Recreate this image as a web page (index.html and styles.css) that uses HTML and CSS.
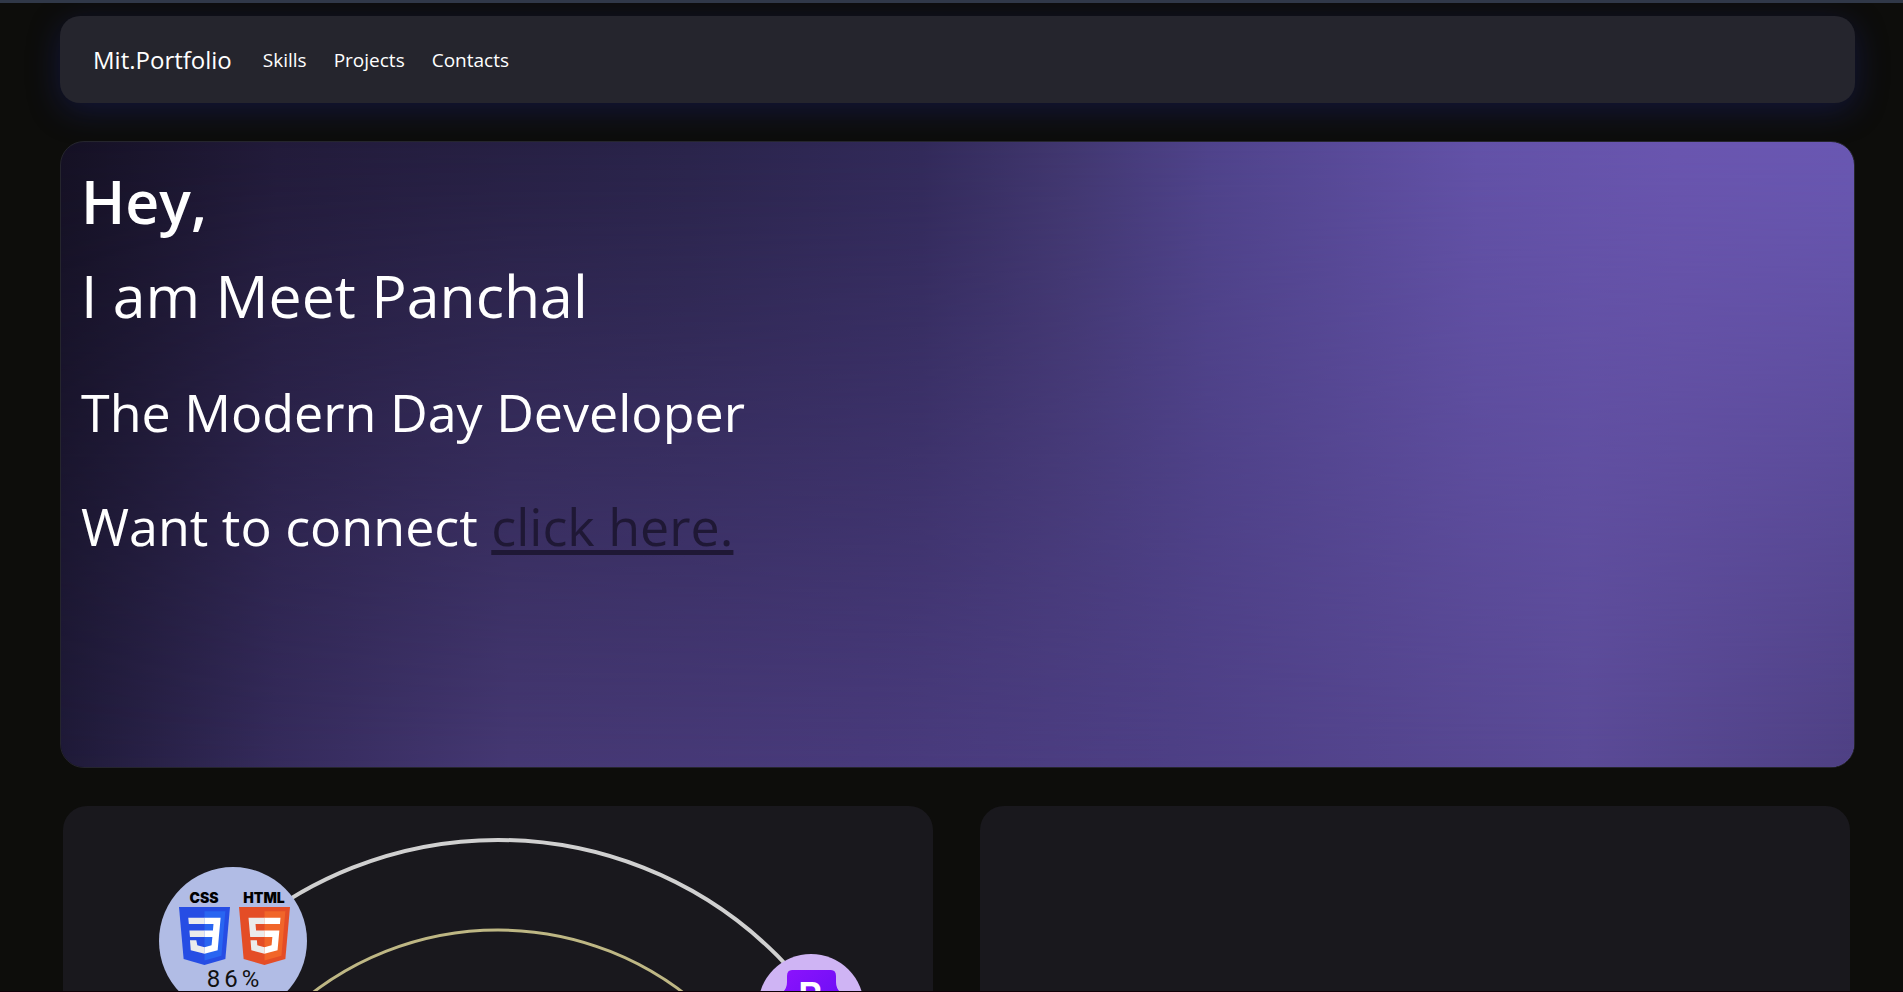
FILE: index.html
```html
<!DOCTYPE html>
<html lang="en">
<head>
<meta charset="utf-8">
<meta name="viewport" content="width=device-width, initial-scale=1">
<title>Mit.Portfolio</title>
<link rel="stylesheet" href="styles.css">
</head>
<body>
<nav class="navbar">
  <a class="brand" href="#top">Mit.Portfolio</a>
  <a class="nav-link" href="#skills">Skills</a>
  <a class="nav-link" href="#projects">Projects</a>
  <a class="nav-link" href="#contacts">Contacts</a>
</nav>
<main class="content" id="top">
  <section class="hero">
    <h1 class="hero-hey">Hey,</h1>
    <p class="hero-name">I am Meet Panchal</p>
    <p class="hero-line hero-role">The Modern Day Developer</p>
    <p class="hero-line">Want to connect <a class="hero-link" href="#contacts">click here.</a></p>
  </section>
  <div class="cards">
    <section class="card" id="skills" aria-label="Skills">
      <svg class="orbits" viewBox="0 0 870 870">
        <defs>
          <linearGradient id="boot" x1="0" y1="0" x2="1" y2="1">
            <stop offset="0" stop-color="#9013fe"/>
            <stop offset="1" stop-color="#5a0cf0"/>
          </linearGradient>
        </defs>
        <circle class="orbit-outer" cx="435" cy="429" r="395"/>
        <circle class="orbit-inner" cx="435" cy="429" r="305"/>
        <circle cx="170" cy="135" r="74" fill="#b1bce5"/>
        <text class="logo-name" x="141" y="97">CSS</text>
        <text class="logo-name" x="201" y="97">HTML</text>
        <svg x="116" y="101" width="51" height="58" viewBox="30 0 451 512">
          <path fill="#264de4" d="M71 460 30 0h451l-41 460-185 52z"/>
          <path fill="#2965f1" d="m256 472 149-41 35-394H256z"/>
          <path fill="#ebebeb" d="M112 94h144v56H117zM122 208h134v57H127zM183 293h-56l7 89 122 32v-59l-64-17z"/>
          <path fill="#fff" d="M255 94h143l-26 288-117 32v-59l63-17 7-73h-70v-57h75l5-58h-80z"/>
        </svg>
        <svg x="176" y="101" width="51" height="58" viewBox="30 0 451 512">
          <path fill="#e44d26" d="M71 460 30 0h451l-41 460-185 52z"/>
          <path fill="#f16529" d="m256 472 149-41 35-394H256z"/>
          <path fill="#ebebeb" d="M256 208h-75l-5-58h80V94H114l15 171h127zM255 355l-63-17-4-45h-56l7 89 116 32z"/>
          <path fill="#fff" d="M255 208v57h70l-7 73-63 17v59l116-32 16-174zM255 94v56h137l5-56z"/>
        </svg>
        <text class="percent" x="172" y="181">86%</text>
        <circle cx="748" cy="201" r="53" fill="#cfb4f4"/>
        <path fill="url(#boot)" d="M729 164h39q5 0 5 6v6q0 6 4 10c4 4 6 8 10 9v8c-9 2-14 9-14 19v6q0 6-5 6h-39q-5 0-5-6v-6c0-10-5-17-14-19v-8c4-1 6-5 10-9q4-4 4-10v-6q0-6 5-6z"/>
        <text class="boot-letter" x="735" y="204">B</text>
      </svg>
    </section>
    <section class="card" id="projects" aria-label="Projects"></section>
  </div>
</main>
</body>
</html>
```
FILE: styles.css
```css
* { box-sizing: border-box; }

html { background: #0d0d0b; scrollbar-width: none; }

body {
  margin: 0;
  padding: 13px 48px 38px 60px;
  border-top: 3px solid #303848;
  background: #0d0d0b;
  color: #fff;
  font-family: "Segoe UI", "Open Sans", "Noto Sans", sans-serif;
}

body::after {
  content: "";
  position: fixed;
  left: 0;
  right: 0;
  bottom: 0;
  height: 1px;
  background: #100007;
}

.navbar {
  display: flex;
  align-items: center;
  gap: 27px;
  padding: 24px 33px;
  min-height: 87px;
  border-radius: 20px;
  background: #25252d;
  box-shadow: 0 8px 32px rgba(31, 38, 135, 0.37);
}

.brand, .nav-link { color: #fff; text-decoration: none; }
.brand { margin-right: 4px; font-size: 24px; line-height: 38px; }
.nav-link { font-size: 19px; line-height: 36px; }

.hero {
  position: relative;
  z-index: 0;
  overflow: hidden;
  margin-top: 38px;
  padding: 12px 20px 120px;
  min-height: 627px;
  border: 1px solid #25252d;
  border-radius: 24px;
  background: linear-gradient(90deg, #151124 0%, #221b3a 12%, #2a244b 35%, #322a5a 48%, #41376f 56%, #4f438b 64%, #6352a8 79%, #6a56b0 90%, #6a58b3 100%);
}

.hero::before {
  content: "";
  position: absolute;
  inset: 0;
  z-index: -1;
  background: linear-gradient(90deg, #1f1a38 0%, #352b5c 12%, #453873 25%, #483a7b 45%, #4d3f85 62%, #5a4a96 85%, #4e4083 100%);
  -webkit-mask-image: linear-gradient(#0000, #000);
  mask-image: linear-gradient(#0000, #000);
}

.hero-hey, .hero-name, .hero-line { margin: 0; font-weight: 400; }
.hero-hey, .hero-name { font-size: 59px; line-height: 94px; }
.hero-hey { font-weight: 600; }
.hero-line { font-size: 52px; line-height: 114px; }
.hero-role { margin-top: 13px; }

.hero-link {
  color: #1f1835;
  text-decoration: underline;
  text-decoration-thickness: 5px;
  text-underline-offset: 4px;
  text-decoration-skip-ink: none;
}

.cards {
  display: grid;
  grid-template-columns: 1fr 1fr;
  gap: 47px;
  margin-top: 38px;
  padding: 0 5px 0 3px;
}

.card {
  overflow: hidden;
  border-radius: 24px;
  background: #19181d;
}

.orbits { display: block; width: 100%; }
.orbit-outer { fill: none; stroke: #d0d0d0; stroke-width: 4; }
.orbit-inner { fill: none; stroke: #beb784; stroke-width: 3; }

.logo-name { font: 900 14px Inter, sans-serif; fill: #000; text-anchor: middle; }
.percent { font: 400 24px Roboto, sans-serif; letter-spacing: 4px; fill: #111; text-anchor: middle; }
.boot-letter { font: 600 38px Inter, sans-serif; fill: #fff; }
```
